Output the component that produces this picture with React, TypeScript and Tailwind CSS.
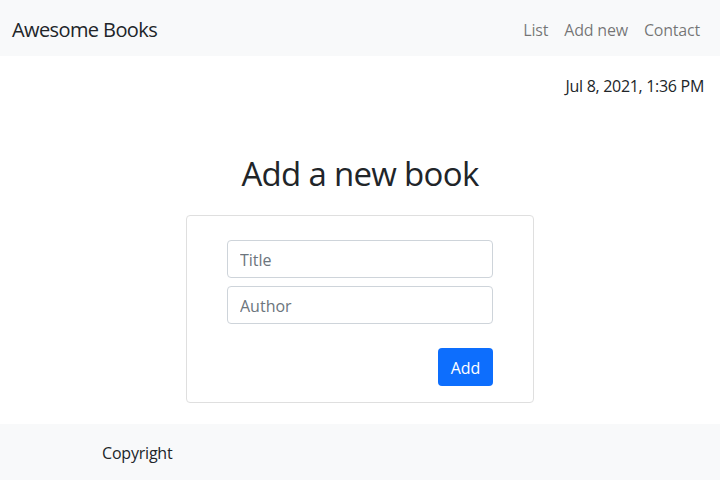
export default function App() {
  return (
    <div className="min-h-[480px] bg-white text-[#212529] font-['Open_Sans',sans-serif] flex flex-col">
      <nav className="h-14 bg-[#f8f9fa] flex items-center justify-between px-3">
        <span className="mt-1 text-[20px] leading-[30px] tracking-[-0.6px]">Awesome Books</span>
        <ul className="mt-1 flex text-base text-black/55 tracking-[-0.2px]">
          <li className="px-2">List</li>
          <li className="px-2">Add new</li>
          <li className="px-2">Contact</li>
        </ul>
      </nav>
      <main className="flex flex-col items-center">
        <p className="self-end pr-4 mt-[18px] leading-6 text-base tracking-[-0.3px]">Jul 8, 2021, 1:36 PM</p>
        <h1 className="mt-[56px] text-[33px] leading-[40px] font-normal tracking-[-0.7px]">Add a new book</h1>
        <form className="mt-[21px] w-[348px] border border-[#dfdfdf] rounded px-10 pt-6 pb-4 flex flex-col">
          <input
            className="h-[38px] border border-[#ced4da] rounded px-3 pt-0.5 text-base placeholder:text-[#6c757d] outline-none"
            placeholder="Title"
          />
          <input
            className="mt-2 h-[38px] border border-[#ced4da] rounded px-3 pt-0.5 text-base placeholder:text-[#6c757d] outline-none"
            placeholder="Author"
          />
          <button type="button" className="mt-6 self-end h-[38px] w-[55px] pt-0.5 rounded bg-[#0d6efd] text-white text-base">
            Add
          </button>
        </form>
      </main>
      <footer className="mt-[21px] h-14 bg-[#f8f9fa] flex items-center pl-[102px]">
        <span className="mt-0.5 text-base tracking-[-0.2px]">Copyright</span>
      </footer>
    </div>
  );
}
